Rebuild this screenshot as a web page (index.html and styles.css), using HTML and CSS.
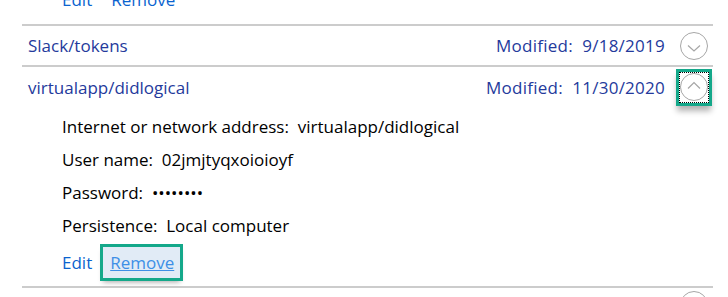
FILE: index.html
```html
<!DOCTYPE html>
<html>
<head>
<meta charset="utf-8">
<link rel="stylesheet" href="styles.css">
</head>
<body>
<div class="list">
  <div class="actions top-actions">
    <a class="link">Edit</a>
    <a class="link plain">Remove</a>
  </div>
  <div class="item">
    <div class="head">
      <span class="name">Slack/tokens</span>
      <span class="mod">Modified:&nbsp; 9/18/2019</span>
      <span class="toggle">
        <svg width="28" height="28" viewBox="0 0 28 28"><circle cx="14" cy="14" r="13.5" fill="none" stroke="#a6a6a6" stroke-width="1"/><path d="M8 13.5 L14 19 L20 13.5" fill="none" stroke="#a6a6a6" stroke-width="1.2"/></svg>
      </span>
    </div>
  </div>
  <div class="item open">
    <div class="head">
      <span class="name">virtualapp/didlogical</span>
      <span class="mod">Modified:&nbsp; 11/30/2020</span>
      <span class="toggle focused">
        <svg width="28" height="28" viewBox="0 0 28 28"><circle cx="14" cy="14" r="13.5" fill="none" stroke="#a6a6a6" stroke-width="1"/><path d="M8 15.5 L14 9.5 L20 15.5" fill="none" stroke="#a6a6a6" stroke-width="1.2"/></svg>
      </span>
    </div>
    <div class="details">
      <div class="row">Internet or network address:&nbsp; virtualapp/didlogical</div>
      <div class="row">User name:&nbsp; 02jmjtyqxoioioyf</div>
      <div class="row">Password:&nbsp; ••••••••</div>
      <div class="row">Persistence:&nbsp; Local computer</div>
      <div class="actions">
        <a class="link">Edit</a>
        <a class="link boxed">Remove</a>
      </div>
    </div>
  </div>
  <div class="item last">
    <div class="head">
      <span class="name"></span>
      <span class="toggle">
        <svg width="28" height="28" viewBox="0 0 28 28"><circle cx="14" cy="14" r="13.5" fill="none" stroke="#a6a6a6" stroke-width="1"/></svg>
      </span>
    </div>
  </div>
</div>
</body>
</html>
```
FILE: styles.css
```css
html, body {
  margin: 0;
  padding: 0;
  background: #ffffff;
  overflow: hidden;
}
body {
  font-family: "Open Sans", "Noto Sans", sans-serif;
  font-size: 17px;
  color: #000;
}
.list {
  margin-left: 22px;
  width: 691px;
  margin-top: -17px;
}
.actions {
  display: flex;
  align-items: center;
  height: 33px;
  line-height: 33px;
  padding-left: 40px;
}
.top-actions {
  padding-bottom: 8px;
}
.link {
  color: #0a63cf;
  text-decoration: none;
}
.link.plain {
  margin-left: 19px;
}
.link.boxed {
  margin-left: 11px;
  padding: 0 6px 0 7px;
  line-height: 31px;
  height: 31px;
  color: #3d8fe6;
  text-decoration: underline;
  background: #e1ebf6;
  outline: 3px solid #14a88a;
  box-shadow: 0 4px 5px rgba(0, 0, 0, 0.35);
}
.item {
  border-top: 2px solid #cccccc;
}
.head {
  display: flex;
  align-items: center;
  height: 39px;
  line-height: 39px;
  color: #243a9c;
}
.open .head {
  height: 40px;
}
.name {
  padding-left: 6px;
}
.mod {
  margin-left: auto;
  letter-spacing: 0.25px;
}
.toggle {
  display: flex;
  align-items: center;
  justify-content: center;
  width: 30px;
  height: 30px;
  margin-left: 14px;
  margin-right: 4px;
}
.last .head {
  align-items: flex-start;
}
.last .toggle {
  margin-left: auto;
  margin-top: 2px;
}
.toggle.focused {
  height: 31px;
  outline: 1px dotted #000;
  outline-offset: -1px;
  box-shadow: 0 0 0 3px #14a88a, 0 6px 6px 2px rgba(0, 0, 0, 0.3);
}
.details {
  padding: 3px 0 7px 40px;
}
.row {
  height: 33px;
  line-height: 33px;
}
.details .actions {
  padding-left: 0;
  margin-top: 4px;
}
```
